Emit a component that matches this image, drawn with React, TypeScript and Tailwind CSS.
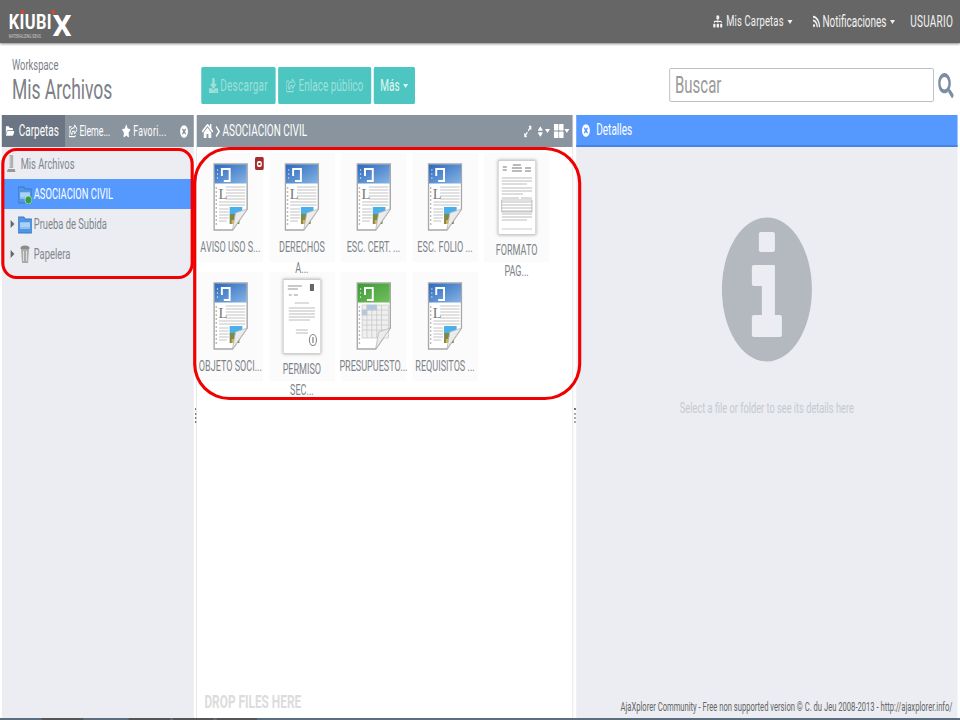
import { ReactNode } from "react";
import {
  FaChevronRight,
  FaDownload,
  FaExpandAlt,
  FaFolderOpen,
  FaHome,
  FaRegShareSquare,
  FaRss,
  FaSearch,
  FaSitemap,
  FaSort,
  FaStar,
  FaThLarge,
  FaTimesCircle,
} from "react-icons/fa";

// the screenshot is squeezed horizontally, so the page is laid out 1536 wide and scaled down to 960
const files = [
  { lines: ["AVISO USO S..."], kind: "doc", badge: true },
  { lines: ["DERECHOS", "A..."], kind: "doc" },
  { lines: ["ESC. CERT. ..."], kind: "doc" },
  { lines: ["ESC. FOLIO ..."], kind: "doc" },
  { lines: ["FORMATO", "PAG..."], kind: "form" },
  { lines: ["OBJETO SOCI..."], kind: "doc" },
  { lines: ["PERMISO", "SEC..."], kind: "letter" },
  { lines: ["PRESUPUESTO..."], kind: "sheet" },
  { lines: ["REQUISITOS ..."], kind: "doc" },
];

function Caret({ tight }: { tight?: boolean }) {
  return (
    <span
      className={`inline-block border-x-[4px] border-t-[4px] border-x-transparent border-t-current ${tight ? "ml-[1px]" : "ml-[6px]"}`}
    />
  );
}

function DocThumb({ sheet }: { sheet?: boolean }) {
  const id = sheet ? "band-sheet" : "band-doc";
  return (
    <svg width="56" height="68" viewBox="0 0 36 68" preserveAspectRatio="none">
      <defs>
        <linearGradient id={id} x1="0" y1="0" x2="1" y2="1">
          <stop offset="0" stopColor={sheet ? "#3c9a34" : "#2c68bd"} />
          <stop offset="1" stopColor={sheet ? "#74bf5e" : "#86b4e4"} />
        </linearGradient>
      </defs>
      <path d="M1 1H35V46L20 67H1Z" fill="#fff" stroke="#a8a8a8" strokeWidth="1.5" />
      <rect x="1.5" y="1.5" width="33" height="19" fill={`url(#${id})`} />
      <path d="M9 13V6h8v12h-6" fill="none" stroke="#fff" strokeWidth="2" />
      <path d="M4 7h1M4 11h1M4 15h1" stroke="#dbe8f7" strokeWidth="1.5" />
      <g fill="#bdbdbd">
        {[24, 28, 32, 36, 40, 44, 48, 52, 56, 60].map((y) => (
          <rect key={y} x="2.5" y={y} width="1.5" height="2" />
        ))}
      </g>
      {sheet ? (
        <g stroke="#c6c6c6" strokeWidth="0.7">
          <rect x="6" y="23" width="27" height="33" fill="#efefef" />
          <rect x="11" y="23" width="10" height="5" fill="#a8c8ee" />
          <rect x="6" y="28" width="5" height="5" fill="#a8c8ee" />
          <path d="M6 28H33M6 33H33M6 38H33M6 43H33M6 48H33M11 23V56M16 23V56M21 23V56M26 23V56" />
        </g>
      ) : (
        <>
          <text x="5.5" y="36" fontSize="15" fontFamily="Liberation Serif, serif" fill="#777">L</text>
          <path d="M13 24H33M13 27H33M13 30H33M13 33H33M13 36H33M6 39H33M6 42H33M6 46H16M6 49H16M6 52H16M6 55H16M6 58H14" stroke="#c2c2c2" strokeWidth="1" />
          <rect x="17" y="44" width="13" height="7" fill="#4ab0ea" />
          <rect x="17" y="51" width="10" height="10" fill="#7f8a4a" />
          <rect x="19" y="57" width="6" height="4" fill="#d8b25a" />
        </>
      )}
      <path d="M20 67L35 46L23 50Z" fill="#ececec" stroke="#b8b8b8" strokeWidth="0.8" />
    </svg>
  );
}

function ScanThumb({ form }: { form?: boolean }) {
  return (
    <div className="w-[60px] h-[75px] bg-white border border-[#cfcfcf] shadow-[0_0_4px_#aaa]">
      <svg width="58" height="73" viewBox="0 0 36 73" preserveAspectRatio="none">
        {form ? (
          <>
            <path d="M4 6h4M4 9h4M14 4h8M13 7h10M13 10h10M26 7h6M26 10h6" stroke="#777" strokeWidth="1" />
            <path d="M3 17H33M3 20H33M3 23H28M3 27H33M3 30H33M3 33H24M3 37H20M22 37H33M3 41H33M3 44H33M3 47H33M3 50H33M3 53H33M3 56H33M3 59H28" stroke="#aaa" strokeWidth="0.8" />
            <rect x="3" y="39" width="30" height="12" fill="none" stroke="#999" strokeWidth="0.6" />
            <path d="M3 68H33" stroke="#ccc" strokeWidth="1" />
          </>
        ) : (
          <>
            <path d="M4 6H18M4 9H14M5 15H8M10 15H14" stroke="#888" strokeWidth="0.9" />
            <rect x="26" y="4" width="4" height="7" fill="#666" />
            <path d="M11 23H25M5 28H31M5 31H31M5 34H31M5 37H31M5 40H26M12 50H24M12 53H24" stroke="#aaa" strokeWidth="0.8" />
            <ellipse cx="29" cy="60" rx="3.5" ry="5.5" fill="none" stroke="#888" strokeWidth="1.1" />
            <path d="M29 57v6" stroke="#999" strokeWidth="1.5" />
          </>
        )}
      </svg>
    </div>
  );
}

function FileCard({ lines, kind, badge }: { lines: string[]; kind: string; badge?: boolean }) {
  const scan = kind === "form" || kind === "letter";
  return (
    <div className="w-[105px] h-[109px] relative bg-[#fbfbfb] flex flex-col items-center">
      {badge && (
        <div className="absolute top-[4px] right-[-1px] w-[14px] h-[13px] rounded-[2px] bg-[#a92c2c] flex items-center justify-center">
          <span className="w-[8px] h-[6px] rounded-full border-2 border-white" />
        </div>
      )}
      <div className={`shrink-0 ${scan ? "h-[87px] pt-[7px]" : "h-[84px] pt-[10px]"}`}>
        {kind === "form" && <ScanThumb form />}
        {kind === "letter" && <ScanThumb />}
        {kind === "doc" && <DocThumb />}
        {kind === "sheet" && <DocThumb sheet />}
      </div>
      <div className="relative z-10 shrink-0 text-center text-[14.5px] leading-[21px] text-[#7d838a] whitespace-nowrap">
        {lines.map((l) => (
          <div key={l}>{l}</div>
        ))}
      </div>
    </div>
  );
}

function PanelHead({ children, className }: { children: ReactNode; className: string }) {
  return <div className={`h-[32px] shrink-0 flex items-center text-white text-[16px] ${className}`}>{children}</div>;
}

function FolderIcon({ shared }: { shared?: boolean }) {
  return (
    <svg width="22" height="19" viewBox="0 0 14 19" preserveAspectRatio="none" className="shrink-0">
      <path d="M0 2h6l1 2h7v14H0Z" fill="#4f97e6" stroke="#3a78c4" />
      <rect x="2" y="7" width="10" height="7" fill="#8fc0f2" />
      <path d="M2 9H12M2 11H12" stroke="#d9e9fa" strokeWidth="0.8" />
      {shared && <ellipse cx="10.5" cy="15" rx="3.5" ry="4" fill="#2f9e44" stroke="#fff" strokeWidth="0.5" />}
    </svg>
  );
}

function DiskIcon() {
  return (
    <svg width="14" height="18" viewBox="0 0 9 18" preserveAspectRatio="none" className="shrink-0">
      <path d="M2.5 0h4v13h-4Z" fill="#b0b0b0" />
      <path d="M3 1v11" stroke="#e2e2e2" />
      <path d="M1 14h7l1 3H0Z" fill="#999" />
    </svg>
  );
}

function TrashIcon() {
  return (
    <svg width="16" height="18" viewBox="0 0 10 18" preserveAspectRatio="none" className="shrink-0">
      <ellipse cx="5" cy="3" rx="4.5" ry="2.5" fill="#8b8b8b" />
      <path d="M1 4h8l-1 14H2Z" fill="#aaa" />
      <path d="M3.5 6v10M6.5 6v10" stroke="#ddd" />
    </svg>
  );
}

function TreeRow({ label, active, arrow, icon, indent, gap }: { label: string; active?: boolean; arrow?: boolean; icon: ReactNode; indent: string; gap: string }) {
  return (
    <div className={`h-[30px] flex items-center text-[15px] ${indent} ${active ? "bg-[#5599ff] text-white" : "text-[#80868c]"}`}>
      {arrow && <span className="absolute left-[14px] border-y-[4px] border-l-[6px] border-y-transparent border-l-[#666]" />}
      {icon}
      <span className={gap}>{label}</span>
    </div>
  );
}

export default function App() {
  return (
    <div className="w-[960px] h-[720px] overflow-hidden">
      <div className="relative w-[1536px] h-[720px] origin-top-left scale-x-[0.625] flex flex-col bg-white font-['Roboto',sans-serif]">
        <header className="h-[43px] shrink-0 bg-[#666666] shadow-[0_1px_3px_#888] flex items-center justify-between pl-[14px] pr-[11px] text-[#f2f2f2] text-[16px]">
          <div className="relative text-white font-bold h-[26px] w-[104px]">
            <span className="absolute left-0 top-[6px] text-[21px] leading-[15px] tracking-[0.5px] origin-left scale-x-[1.25]">KIUBI</span>
            <span className="absolute left-[70px] top-[6px] text-[30px] leading-[21px] origin-left scale-x-[1.6]">X</span>
            <span className="absolute left-[19px] top-[1px] w-[6px] h-[4px] rounded-full bg-[#d9462a]" />
            <span className="absolute left-[68px] top-[1px] w-[6px] h-[4px] rounded-full bg-[#d9462a]" />
            <span className="absolute left-0 top-[25px] text-[5px] leading-[4px] font-normal text-[#ccc] whitespace-nowrap">MATERIALIZING IDEAS</span>
          </div>
          <nav className="flex items-center">
            <FaSitemap size={15} className="mr-[6px]" />
            <span className="text-[15px] tracking-[0.3px]">Mis Carpetas</span>
            <Caret />
            <FaRss size={13} className="ml-[32px] mr-[3px]" />
            <span>Notificaciones</span>
            <Caret />
            <span className="ml-[24px] tracking-[0.4px]">USUARIO</span>
          </nav>
        </header>

        <div className="h-[72px] shrink-0 flex items-start">
          <div className="w-[322px] pl-[19px] pt-[14px] text-[#7b8086]">
            <div className="text-[15px] leading-[16px]">Workspace</div>
            <div className="text-[28px] leading-[32px] mt-[1px]">Mis Archivos</div>
          </div>
          <div className="flex gap-[4px] pt-[24px] text-[16px] text-[#9fe0dc]">
            <div className="h-[37px] w-[119px] bg-[#4dc5c1] rounded-[2px] flex items-center justify-center gap-[3px] tracking-[0.4px]">
              <FaDownload size={15} />
              Descargar
            </div>
            <div className="h-[37px] w-[149px] bg-[#4dc5c1] rounded-[2px] flex items-center justify-center gap-[5px]">
              <FaRegShareSquare size={15} />
              Enlace público
            </div>
            <div className="h-[37px] w-[66px] bg-[#4dc5c1] rounded-[2px] flex items-center justify-center text-[#e0f6f4]">
              Más
              <Caret />
            </div>
          </div>
          <div className="ml-auto pt-[25px] pr-[10px] flex items-center gap-[7px]">
            <div className="w-[423px] h-[34px] border border-[#a9b1b9] rounded-[2px] flex items-center px-[8px] text-[24px] text-[#9a9a9a]">Buscar</div>
            <FaSearch size={25} className="text-[#7a8ea3]" />
          </div>
        </div>

        <main className="h-[603px] shrink-0 flex pl-[3px]">
          <section className="relative w-[307px] bg-[#ebedf2] flex flex-col">
            <PanelHead className="bg-[#8a949e]">
              <div className="h-full w-[101px] shrink-0 bg-[#6b7583] flex items-center pl-[6px] gap-[7px]">
                <FaFolderOpen size={14} />
                Carpetas
              </div>
              <div className="w-[91px] shrink-0 flex items-center gap-[3px] text-[14px] pl-[6px]">
                <FaRegShareSquare size={14} />
                Eleme...
              </div>
              <div className="w-[93px] shrink-0 flex items-center gap-[4px] text-[14px] tracking-[0.5px]">
                <FaStar size={14} />
                Favori...
              </div>
              <FaTimesCircle size={13} />
            </PanelHead>
            <div className="pt-[2px]">
              <TreeRow label="Mis Archivos" indent="pl-[8px]" gap="ml-[8px]" icon={<DiskIcon />} />
              <TreeRow label="ASOCIACION CIVIL" indent="pl-[26px]" gap="ml-[3px]" active icon={<FolderIcon shared />} />
              <TreeRow label="Prueba de Subida" indent="pl-[26px]" gap="ml-[3px]" arrow icon={<FolderIcon />} />
              <TreeRow label="Papelera" indent="pl-[29px]" gap="ml-[6px]" arrow icon={<TrashIcon />} />
            </div>
          </section>

          <section className="relative ml-[4px] w-[603px] bg-white flex flex-col border-x border-[#d9d9d9]">
            <PanelHead className="bg-[#8a949e] pl-[8px]">
              <FaHome size={18} />
              <FaChevronRight size={13} className="ml-[1px] mr-[1px]" />
              <span>ASOCIACION CIVIL</span>
              <div className="ml-auto flex items-center pr-[5px]">
                <FaExpandAlt size={13} />
                <FaSort size={13} className="ml-[7px]" />
                <Caret tight />
                <FaThLarge size={16} className="ml-[6px]" />
                <Caret tight />
              </div>
            </PanelHead>
            <div className="pl-[1px] pt-[6px] flex flex-wrap gap-x-[9.5px] gap-y-[10px] content-start">
              {files.map((f) => (
                <FileCard key={f.lines[0]} {...f} />
              ))}
            </div>
            <div className="absolute left-[12px] bottom-[5px] text-[19px] leading-[22px] font-bold text-[#dcdcdc]">DROP FILES HERE</div>
          </section>

          <section className="relative ml-[5px] w-[610px] bg-[#ebedf2] flex flex-col">
            <PanelHead className="bg-[#5599ff] pl-[9px] gap-[10px] border-b-2 border-[#4583de]">
              <FaTimesCircle size={13} />
              Detalles
            </PanelHead>
            <div className="flex flex-col items-center pt-[70px]">
              <svg width="144" height="145" viewBox="0 0 90 145" preserveAspectRatio="none">
                <ellipse cx="45" cy="72.5" rx="45" ry="72" fill="#b4b8bf" />
                <path d="M37 17a2 2 0 0 1 2-2h12a2 2 0 0 1 2 2v16a2 2 0 0 1-2 2H39a2 2 0 0 1-2-2ZM30 50a2 2 0 0 1 2-2h20a1 1 0 0 1 1 1v49h5a2 2 0 0 1 2 2v18a2 2 0 0 1-2 2H32a2 2 0 0 1-2-2V100a2 2 0 0 1 2-2h8V69h-8a2 2 0 0 1-2-2Z" fill="#ebedf2" />
              </svg>
              <div className="mt-[36px] text-[14.8px] leading-[20px] text-[#c6cacf]">Select a file or folder to see its details here</div>
            </div>
            <div className="absolute right-[8px] bottom-[4px] text-[12.2px] leading-[14px] text-[#666] whitespace-nowrap">
              AjaXplorer Community - Free non supported version © C. du Jeu 2008-2013 - http://ajaxplorer.info/
            </div>
          </section>
        </main>

        <div className="h-[2px] shrink-0 bg-[#5b6d7e] flex">
          <span className="ml-[67px] w-[66px] bg-[#555]" />
          <span className="ml-[73px] w-[66px] bg-[#555]" />
          <span className="ml-[5px] w-[64px] bg-[#555]" />
          <span className="ml-[6px] w-[64px] bg-[#555]" />
        </div>

        <div className="absolute left-[312px] top-[408px] h-[15px] border-l-2 border-dotted border-[#777]" />
        <div className="absolute left-[919px] top-[408px] h-[15px] border-l-2 border-dotted border-[#777]" />

        <div className="absolute left-[2px] top-[148px] w-[308px] h-[131px] border-x-[5px] border-y-[3px] border-[#f00000] rounded-[24px/16px] pointer-events-none" />
        <div className="absolute left-[309px] top-[147px] w-[621px] h-[253px] border-x-[5px] border-y-[3px] border-[#f00000] rounded-[58px/36px] pointer-events-none" />
      </div>
    </div>
  );
}
